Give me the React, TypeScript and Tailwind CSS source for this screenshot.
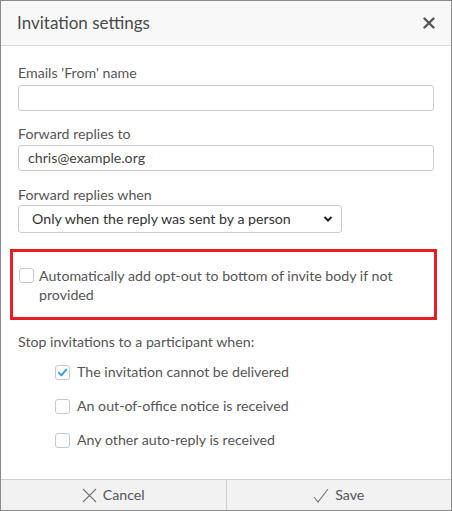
import React from "react";

function Check({ checked }: { checked?: boolean }) {
  return (
    <span className="w-[15px] h-[15px] shrink-0 rounded-[3px] border border-[#c4c8d0] bg-white flex items-center justify-center">
      {checked && (
        <svg width="11" height="11" viewBox="0 0 12 12">
          <path d="M2 6.5 L4.8 9.2 L10 2.8" fill="none" stroke="#1ea1e6" strokeWidth="2" strokeLinecap="round" strokeLinejoin="round" />
        </svg>
      )}
    </span>
  );
}

export default function App() {
  return (
    <div
      className="w-[452px] h-[511px] border border-[#8a8a8a] bg-white flex flex-col text-[#555] text-[14.2px]"
      style={{ fontFamily: "Lato, 'Open Sans', sans-serif" }}
    >
      <div className="h-[45px] shrink-0 bg-[#f8f8f8] border-b border-[#dadada] flex items-center justify-between pl-[16px] pr-[16px]">
        <span className="text-[17px] text-[#4a4a4a]">Invitation settings</span>
        <svg width="12" height="12" viewBox="0 0 12 12">
          <path d="M1.5 1.5 L10.5 10.5 M10.5 1.5 L1.5 10.5" stroke="#555" strokeWidth="2.4" strokeLinecap="round" />
        </svg>
      </div>
      <div className="flex-1 flex flex-col px-[17px] pt-[17px]">
        <label className="leading-[20px]">Emails 'From' name</label>
        <div className="mt-[2px] h-[26px] border border-[#c8ccd2] rounded-[3px]" />
        <label className="mt-[13px] leading-[20px]">Forward replies to</label>
        <div className="mt-[1px] h-[26px] border border-[#c8ccd2] rounded-[3px] flex items-center px-[9px] text-[#444]">
          chris@example.org
        </div>
        <label className="mt-[14px] leading-[20px]">Forward replies when</label>
        <div className="w-[324px] h-[28px] border border-[#c8ccd2] rounded-[3px] flex items-center justify-between pl-[13px] pr-[8px] text-[#333]">
          <span>Only when the reply was sent by a person</span>
          <svg width="10" height="8" viewBox="0 0 10 8">
            <path d="M1.5 2 L5 5.5 L8.5 2" fill="none" stroke="#222" strokeWidth="2" />
          </svg>
        </div>
        <div className="mt-[16px] -mx-[8px] w-[427px] h-[71px] border-[3.5px] border-[#ec1c24] flex items-start pl-[6px] pt-[14px] gap-[5px] leading-[19px]">
          <div className="pt-[2px]"><Check /></div>
          <span className="pr-[30px]">Automatically add opt-out to bottom of invite body if not provided</span>
        </div>
        <div className="mt-[12px] leading-[20px]">Stop invitations to a participant when:</div>
        <div className="flex flex-col pl-[37px] mt-[10px] gap-[14px]">
          <div className="flex items-center gap-[7px] h-[20px]"><Check checked /><span>The invitation cannot be delivered</span></div>
          <div className="flex items-center gap-[7px] h-[20px]"><Check /><span>An out-of-office notice is received</span></div>
          <div className="flex items-center gap-[7px] h-[20px]"><Check /><span>Any other auto-reply is received</span></div>
        </div>
      </div>
      <div className="h-[31px] shrink-0 bg-[#f2f2f2] border-t border-[#cfcfcf] flex">
        <div className="flex-1 flex items-center justify-center gap-[6px] border-r border-[#cfcfcf]">
          <svg width="15" height="15" viewBox="0 0 15 15">
            <path d="M1 1 L14 14 M14 1 L1 14" stroke="#777" strokeWidth="1.1" />
          </svg>
          <span>Cancel</span>
        </div>
        <div className="flex-1 flex items-center justify-center gap-[6px]">
          <svg width="16" height="15" viewBox="0 0 16 15">
            <path d="M1 9 L5 14 L15 1" fill="none" stroke="#777" strokeWidth="1.1" />
          </svg>
          <span>Save</span>
        </div>
      </div>
    </div>
  );
}
